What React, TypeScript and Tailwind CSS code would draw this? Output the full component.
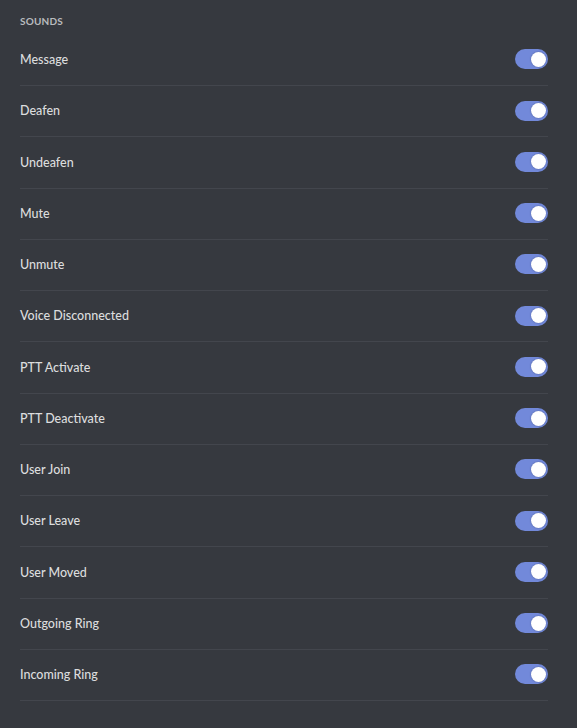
import React from "react";

const items = [
  "Message",
  "Deafen",
  "Undeafen",
  "Mute",
  "Unmute",
  "Voice Disconnected",
  "PTT Activate",
  "PTT Deactivate",
  "User Join",
  "User Leave",
  "User Moved",
  "Outgoing Ring",
  "Incoming Ring",
];

function Toggle() {
  return (
    <div className="flex h-[20px] w-[33px] items-center justify-end rounded-full bg-[#7289da] pr-[2px]">
      <div className="h-[15px] w-[15px] rounded-full bg-white shadow-[0_0_2px_rgba(0,0,0,0.3)]" />
    </div>
  );
}

export default function App() {
  return (
    <div
      className="min-h-[728px] w-full bg-[#36393f] pl-[20px] pr-[29px] pt-[15px]"
      style={{ fontFamily: "Lato, 'Open Sans', sans-serif" }}
    >
      <div className="h-[19.75px] text-[10px] font-bold uppercase leading-[12px] tracking-[0.2px] text-[#b9bbbe]">
        Sounds
      </div>
      <div className="flex flex-col">
        {items.map((label) => (
          <div
            key={label}
            className="flex h-[51.25px] items-center justify-between border-b border-[#43464d] pb-[1px]"
          >
            <span className="pt-[2px] text-[12.5px] font-medium text-[#dcddde]">{label}</span>
            <Toggle />
          </div>
        ))}
      </div>
    </div>
  );
}
